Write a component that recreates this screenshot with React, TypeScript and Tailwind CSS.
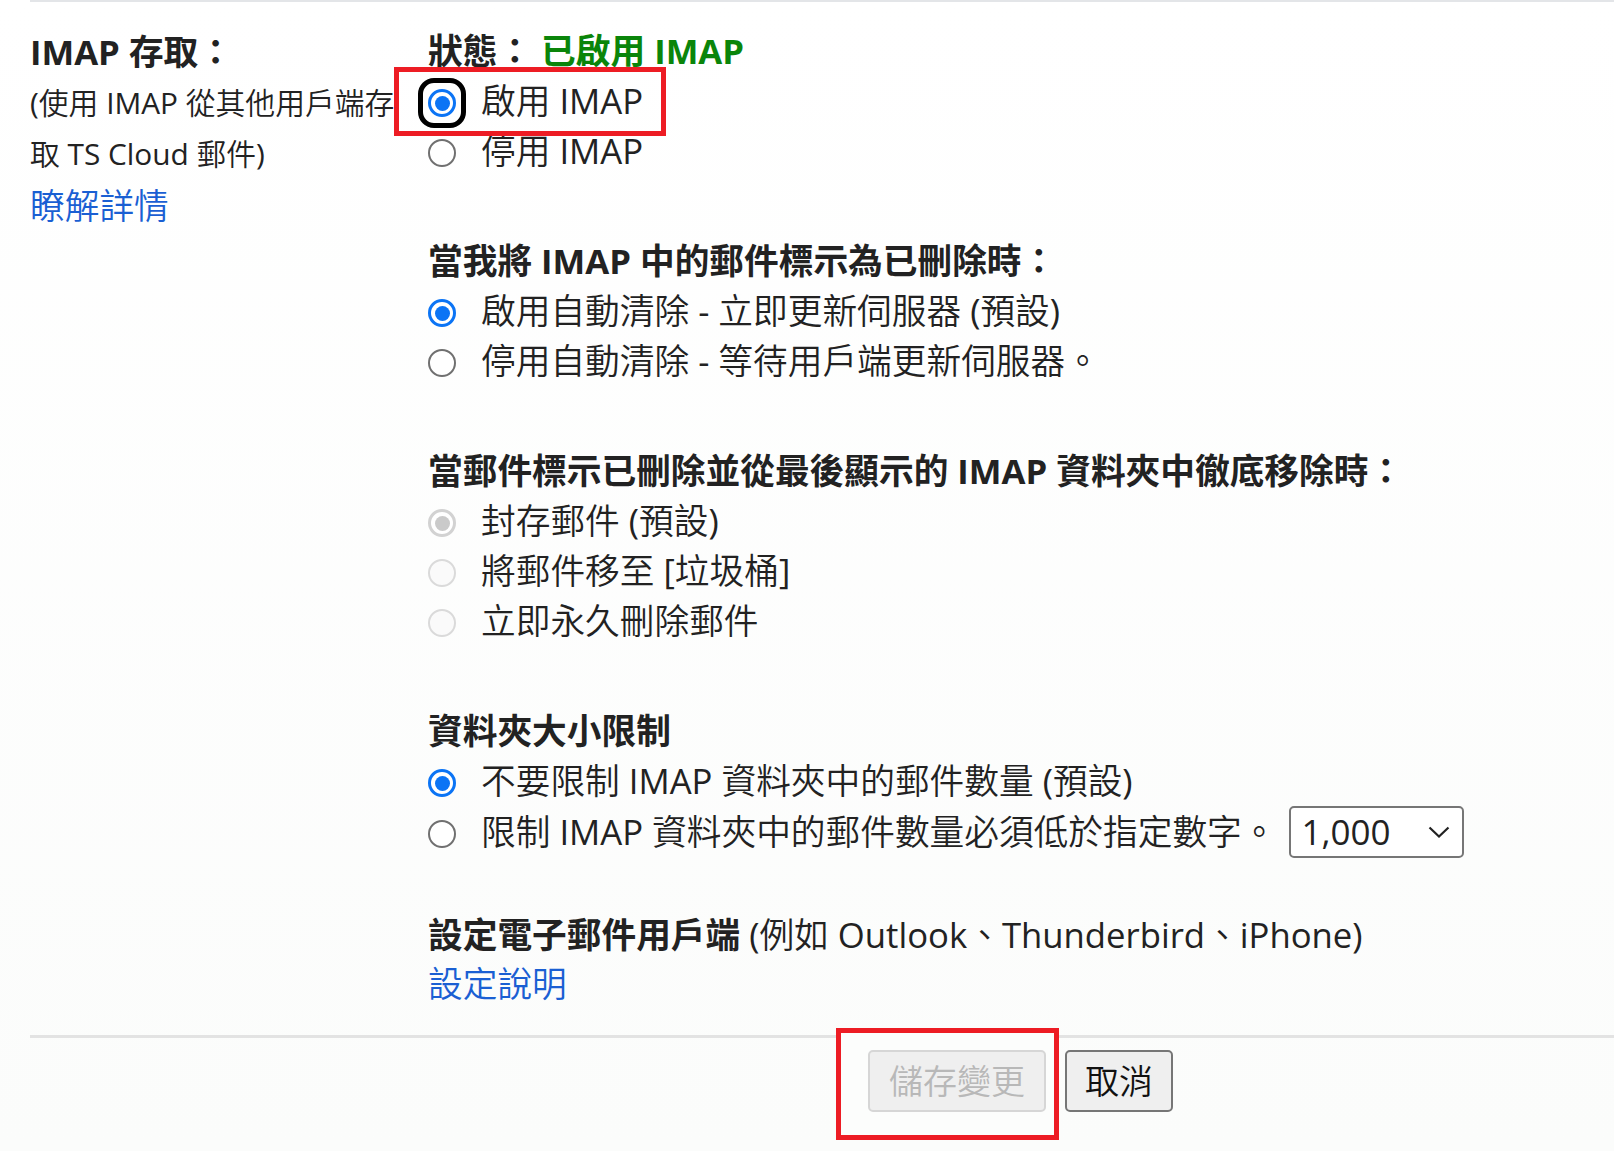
import React from "react";

const FONT = '"Open Sans", "Noto Sans CJK TC", sans-serif';

// Latin runs use the regular cut, CJK runs stay on the lighter body weight
function Txt({ children }: { children: string }) {
  const parts = children.split(/([\x20-\x7E]+)/);
  return (
    <>
      {parts.map((p, i) =>
        /[\x21-\x7E]/.test(p) ? (
          <span key={i} className="font-normal">
            {p}
          </span>
        ) : (
          p
        ),
      )}
    </>
  );
}

type RadioState = { checked?: boolean; disabled?: boolean };

// Circle drawn like the browser's own radio control, scaled up
function RadioMark({ checked, disabled }: RadioState) {
  if (checked) {
    return (
      <span
        className={`flex h-[28px] w-[28px] items-center justify-center rounded-full border-[3px] bg-white ${
          disabled ? "border-[#d2d2d2]" : "border-[#0b74f5]"
        }`}
      >
        <span className={`h-[15px] w-[15px] rounded-full ${disabled ? "bg-[#cacaca]" : "bg-[#0b74f5]"}`} />
      </span>
    );
  }
  return (
    <span
      className={`block h-[28px] w-[28px] rounded-full border-[2.5px] ${
        disabled ? "border-[#dadada] bg-[#fafafa]" : "border-[#707070] bg-white"
      }`}
    />
  );
}

type RowProps = RadioState & {
  label: string;
  focused?: boolean;
  className?: string;
  children?: React.ReactNode;
};

function RadioRow({ label, checked, disabled, focused, className, children }: RowProps) {
  return (
    <label className={`flex items-center ${className ?? "h-[50px]"}`}>
      <span className="relative mt-[4px] shrink-0">
        <RadioMark checked={checked} disabled={disabled} />
        {focused && (
          <span className="pointer-events-none absolute -bottom-[11px] -left-[10px] -right-[10px] -top-[11px] rounded-[16px] border-[5px] border-black" />
        )}
      </span>
      <span className="ml-[25px] whitespace-nowrap">
        <Txt>{label}</Txt>
      </span>
      {children}
    </label>
  );
}

function Heading({ children, className }: { children: React.ReactNode; className?: string }) {
  return (
    <div className={`h-[50px] whitespace-nowrap font-bold leading-[50px] ${className ?? ""}`}>
      {children}
    </div>
  );
}

export default function App() {
  return (
    <div
      className="relative min-h-screen w-full overflow-hidden bg-linear-to-b from-[#ffffff] to-[#fbfcfb] text-[34.7px] font-[350] text-[#222]"
      style={{ fontFamily: FONT }}
    >
      <div className="ml-[30px] h-[2px] bg-[#e3e5e8]" />

      <div className="flex">
        {/* label column */}
        <div className="w-[400px] shrink-0 pl-[30px] pt-[24px]">
          <div className="h-[51px] whitespace-nowrap font-bold leading-[51px]">IMAP 存取：</div>
          <div className="h-[51px] whitespace-nowrap text-[29.8px] leading-[51px]">
            <Txt>(使用 IMAP 從其他用戶端存</Txt>
          </div>
          <div className="h-[51px] whitespace-nowrap text-[29.8px] leading-[51px]">
            <Txt>取 TS Cloud 郵件)</Txt>
          </div>
          <a className="mt-[2px] block h-[50px] leading-[50px] text-[#1a5fd3]" href="#">
            瞭解詳情
          </a>
        </div>

        {/* settings column */}
        <div className="pl-[28px] pt-[24px]">
          <Heading>
            狀態： <span className="text-[#0a850a]">已啟用 IMAP</span>
          </Heading>
          <RadioRow label="啟用 IMAP" checked focused />
          <RadioRow label="停用 IMAP" />

          <Heading className="mt-[60px]">當我將 IMAP 中的郵件標示為已刪除時：</Heading>
          <RadioRow label="啟用自動清除 - 立即更新伺服器 (預設)" checked />
          <RadioRow label="停用自動清除 - 等待用戶端更新伺服器。" />

          <Heading className="mt-[60px]">當郵件標示已刪除並從最後顯示的 IMAP 資料夾中徹底移除時：</Heading>
          <RadioRow label="封存郵件 (預設)" checked disabled />
          <RadioRow label="將郵件移至 [垃圾桶]" disabled />
          <RadioRow label="立即永久刪除郵件" disabled />

          <Heading className="mt-[60px]">資料夾大小限制</Heading>
          <RadioRow label="不要限制 IMAP 資料夾中的郵件數量 (預設)" checked />
          <RadioRow label="限制 IMAP 資料夾中的郵件數量必須低於指定數字。" className="h-[52px]">
            <div className="ml-[12px] flex h-[52px] w-[175px] items-center justify-between rounded-[5px] border-2 border-[#767676] bg-white pl-[11px] pr-[12px] text-[35px] font-normal">
              <span>1,000</span>
              <svg width="22" height="12" viewBox="0 0 22 12" fill="none">
                <path d="M1.5 1.5 L11 10.5 L20.5 1.5" stroke="#222" strokeWidth="2.2" />
              </svg>
            </div>
          </RadioRow>

          <div className="mt-[52px] h-[50px] whitespace-nowrap leading-[50px]">
            <span className="font-bold">設定電子郵件用戶端</span>{" "}
            <Txt>(例如 Outlook、Thunderbird、iPhone)</Txt>
          </div>
          <a className="block h-[48px] leading-[48px] text-[#1a5fd3]" href="#">
            設定說明
          </a>
        </div>
      </div>

      <div className="ml-[30px] mt-[27px] h-[3px] bg-[#e3e3e3]" />

      {/* highlight frames */}
      <div className="pointer-events-none absolute left-[394px] top-[67px] h-[69px] w-[272px] border-[5px] border-[#ed1c24]" />
      <div className="pointer-events-none absolute left-[836px] top-[1028px] h-[112px] w-[223px] border-[5px] border-[#ed1c24] bg-[#fcfdfc]" />

      <div className="relative ml-[868px] mt-[12px] flex gap-[19px]">
        <button
          disabled
          className="h-[62px] w-[178px] rounded-[5px] border-2 border-[#d6d6d6] bg-[#efefef] text-[34px] text-[#b8b8b8]"
        >
          儲存變更
        </button>
        <button className="h-[62px] w-[108px] rounded-[5px] border-[2.5px] border-[#767676] bg-[#efefef] text-[34px] text-[#111]">
          取消
        </button>
      </div>
    </div>
  );
}
